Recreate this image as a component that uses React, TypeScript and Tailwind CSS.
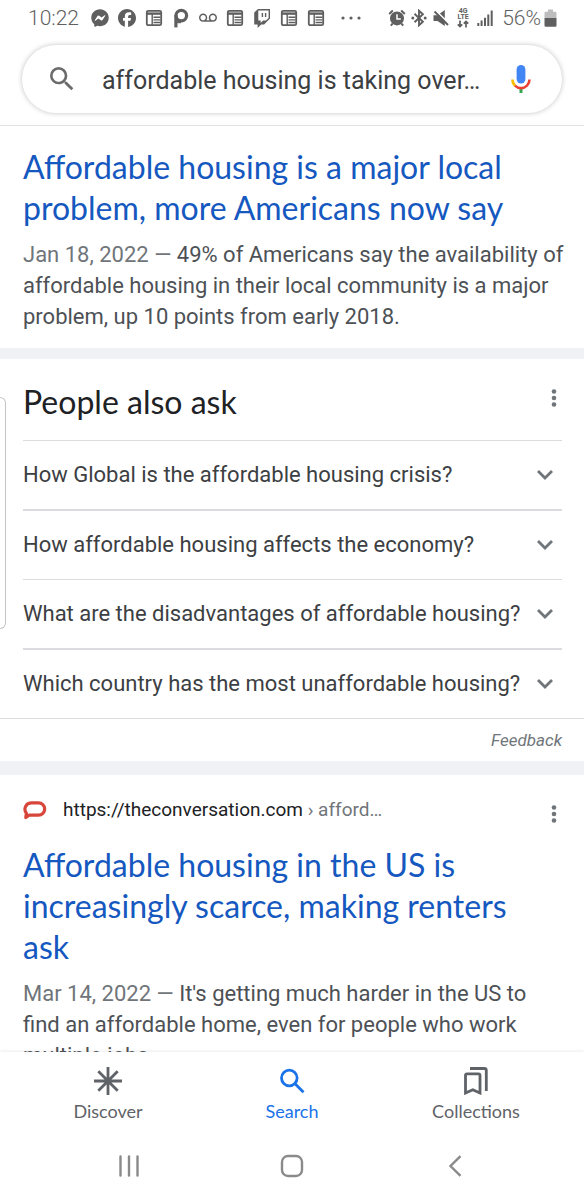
import { useState } from "react";
import { FaFacebook, FaFacebookMessenger } from "react-icons/fa6";
import { MdSearch, MdVoicemail } from "react-icons/md";

const questions = [
  { text: "How Global is the affordable housing crisis?", border: "border-t" },
  { text: "How affordable housing affects the economy?", border: "border-t-2" },
  { text: "What are the disadvantages of affordable housing?", border: "border-t" },
  { text: "Which country has the most unaffordable housing?", border: "border-t-2" },
];

const NewsIcon = () => (
  <svg viewBox="0 0 18 18" className="size-[18px]" fill="none" stroke="currentColor">
    <rect x="1.8" y="1.8" width="14.4" height="14.4" rx="1.5" strokeWidth="1.8" />
    <path d="M2 4.6h14" strokeWidth="2.4" />
    <path d="M7.2 5v11" strokeWidth="1.4" />
    <path d="M8.5 8.3h7M8.5 10.9h7M8.5 13.5h7" strokeWidth="1.4" />
  </svg>
);

const PandoraIcon = () => (
  <svg viewBox="0 0 18 20" className="h-5 w-[18px]" fill="none" stroke="currentColor">
    <circle cx="9.3" cy="7.6" r="5.3" strokeWidth="3.2" />
    <path d="M3.9 7v12.4" strokeWidth="3.2" />
    <path d="M5 14.2h4" strokeWidth="2" />
  </svg>
);

const TwitchIcon = () => (
  <svg viewBox="0 0 18 20" className="h-5 w-[18px]">
    <path d="M5 1 1.2 4.6v11.8h3.4V20l3.6-3.6h2.9L17 10.6V1z" fill="currentColor" />
    <path d="M5.3 2.4h10.3v7.5l-2.7 2.7h-2.8l-2.4 2.3v-2.3H5.3z" fill="#fff" />
    <path d="M9.4 5v4M12.6 5v4" stroke="currentColor" strokeWidth="1.4" />
  </svg>
);

const AlarmIcon = () => (
  <svg viewBox="0 0 18 18" className="size-[18px]">
    <path d="M1.2 5 4.8 1.6M16.8 5l-3.6-3.4M4.6 14.6l-1.8 2M13.4 14.6l1.8 2" stroke="currentColor" strokeWidth="2" />
    <circle cx="9" cy="9.4" r="7" fill="currentColor" />
    <path d="M9 5.2v4.7h3.8" fill="none" stroke="#fff" strokeWidth="1.5" />
  </svg>
);

const BluetoothIcon = () => (
  <svg viewBox="0 0 18 18" className="size-[18px]">
    <path d="m4.500 4.800 8.400 8L9 16.300V1.700l3.900 3.500-8.400 8" fill="none" stroke="currentColor" strokeWidth="1.900" />
    <circle cx="2.800" cy="9" r="1.500" fill="currentColor" />
    <circle cx="15.200" cy="9" r="1.500" fill="currentColor" />
  </svg>
);

const MuteIcon = () => (
  <svg viewBox="0 0 18 18" className="size-[18px]">
    <path d="M1.500 6.200h4L12.800 1v16L5.500 12h-4z" fill="currentColor" />
    <path d="M3.800 1.600 17.200 14.600" stroke="#fff" strokeWidth="1.500" />
    <path d="M2.500 2.500 16 16" stroke="currentColor" strokeWidth="2" />
  </svg>
);

const LteIcon = () => (
  <div className="flex w-[18px] flex-col items-center text-[7px] leading-[6px] font-bold">
    <span>4G</span>
    <span>LTE</span>
    <svg viewBox="0 0 12 8" className="h-2 w-3" fill="none" stroke="currentColor" strokeWidth="1.7">
      <path d="M3 .5v6M.8 4.3 3 6.6l2.2-2.3M9 7.5v-6M6.8 3.7 9 1.4l2.2 2.3" />
    </svg>
  </div>
);

const SignalIcon = () => (
  <svg viewBox="0 0 18 18" className="size-[18px]" stroke="currentColor" strokeWidth="2">
    <path d="M2.3 17v-3M5.6 17v-5.4M9 17V8.8M12.3 17V5.6M15.7 17V1.5" />
  </svg>
);

const BatteryIcon = () => (
  <svg viewBox="0 0 13 18" className="h-[18px] w-[13px]">
    <path d="M4 .5h5v2.3h2.3A1.2 1.2 0 0 1 12.5 4v5H.5V4a1.2 1.2 0 0 1 1.2-1.2H4z" fill="#bdbdbd" />
    <path d="M.5 9h12v7.5a1.2 1.2 0 0 1-1.2 1.2H1.7A1.2 1.2 0 0 1 .5 16.5z" fill="currentColor" />
  </svg>
);

const MicIcon = () => (
  <svg viewBox="0 0 20 28" className="h-7 w-5" fill="none">
    <rect x="5.6" y="0" width="8.8" height="18.5" rx="4.4" fill="#4285f4" />
    <path d="M10 23v5" stroke="#34a853" strokeWidth="3" />
    <path d="M1.5 14.5c0 2.7 1 4.8 2.6 6.2" stroke="#fbbc04" strokeWidth="2.6" />
    <path d="M4 20.6C7.5 24 12.5 24 16 20.6c1.6-1.5 2.5-3.6 2.5-6.1" stroke="#ea4335" strokeWidth="2.6" />
  </svg>
);

const KebabIcon = () => (
  <svg viewBox="0 0 6 18" className="h-[18px] w-[6px]" fill="currentColor">
    <circle cx="3" cy="2.5" r="2.3" />
    <circle cx="3" cy="9" r="2.3" />
    <circle cx="3" cy="15.5" r="2.3" />
  </svg>
);

const ChevronIcon = () => (
  <svg viewBox="0 0 16 12" className="h-3 w-4 shrink-0 text-[#70757a]" fill="none" stroke="currentColor" strokeWidth="2.8">
    <path d="m1 2 7 7 7-7" />
  </svg>
);

const ConversationIcon = () => (
  <svg viewBox="0 0 24 20" className="h-5 w-6" fill="none" stroke="#d8453a" strokeWidth="3.2">
    <path d="M8 2.8h7.500a6 6 0 0 1 0 12.400H6L2.800 17.500l.6-4.300A6.400 6.400 0 0 1 8 2.800z" strokeLinejoin="round" />
  </svg>
);

const DiscoverIcon = () => (
  <svg viewBox="0 0 28 28" className="size-7" stroke="currentColor" strokeWidth="2.8">
    <path d="M14 0v28M0 14h28M4.3 4.3l19.4 19.4M23.7 4.3 4.3 23.7" />
  </svg>
);

const CollectionsIcon = () => (
  <svg viewBox="0 0 28 28" className="size-7" fill="none" stroke="currentColor" strokeWidth="2.8">
    <path d="M3.500 26V8.300a1.500 1.500 0 0 1 1.500-1.500h11.500a1.500 1.500 0 0 1 1.500 1.500V26l-7.200-3.200z" />
    <path d="M8 1.500h14.300a2 2 0 0 1 2 2V24" />
  </svg>
);

const StatusBar = () => (
  <div className="flex h-9 shrink-0 items-center pr-[27px] pb-px pl-7 text-[#5f5f5f]">
    <span className="text-[21px] leading-6 font-light">10:22</span>
    <div className="ml-3 flex items-center gap-[9px]">
      <FaFacebookMessenger className="size-[18px]" />
      <FaFacebook className="size-[18px]" />
      <NewsIcon />
      <PandoraIcon />
      <MdVoicemail className="size-[18px]" />
      <NewsIcon />
      <TwitchIcon />
      <NewsIcon />
      <NewsIcon />
    </div>
    <svg viewBox="0 0 20 4" className="ml-4 h-1 w-5" fill="currentColor">
      <circle cx="2" cy="2" r="1.6" />
      <circle cx="10" cy="2" r="1.6" />
      <circle cx="18" cy="2" r="1.6" />
    </svg>
    <div className="ml-auto flex items-center gap-1">
      <AlarmIcon />
      <BluetoothIcon />
      <MuteIcon />
      <LteIcon />
      <SignalIcon />
      <div className="ml-1 flex items-center gap-[3px]">
        <span className="text-[21px] leading-6 font-light">56%</span>
        <BatteryIcon />
      </div>
    </div>
  </div>
);

const SearchBar = () => {
  const [query, setQuery] = useState("affordable housing is taking over…");

  return (
    <header className="shrink-0 border-b border-[#dfe1e5] px-[22px] pt-[9px] pb-3">
      <form className="flex h-[68px] items-center rounded-full bg-white pr-[31px] pl-6 shadow-[0_0_5px_rgba(32,33,36,0.28)]">
        <MdSearch className="size-8 shrink-0 text-[#6b6b6b]" />
        <input
          aria-label="Search"
          value={query}
          onChange={(e) => setQuery(e.target.value)}
          className="ml-6 min-w-0 flex-1 pt-1 text-[25px] leading-8 text-[#3c4043] outline-none"
        />
        <button type="button" aria-label="Voice search" className="shrink-0">
          <MicIcon />
        </button>
      </form>
    </header>
  );
};

const ResultTitle = ({ children }: { children: string }) => (
  <h3 className="pr-3 font-['Lato'] text-[32px] leading-[41px] text-[#1558c0]">
    <a href="#">{children}</a>
  </h3>
);

const Snippet = ({ date, children }: { date: string; children: string }) => (
  <p className="mt-[11px] text-[22px] leading-[31px] text-[#4d5156]">
    <span className="text-[#70757a]">{date} — </span>
    {children}
  </p>
);

const PeopleAlsoAsk = () => (
  <section>
    <div className="pr-[22px] pl-[23px]">
      <div className="flex h-[81px] items-center justify-between pr-[5px] pb-1">
        <h2 className="pt-2 font-['Lato'] text-[32px] leading-10 text-[#202124]">People also ask</h2>
        <button aria-label="About these questions" className="text-[#70757a]">
          <KebabIcon />
        </button>
      </div>
      {questions.map((q) => (
        <div key={q.text} className={`${q.border} border-[#dadce0]`}>
          <button className="flex h-[68px] w-full items-center justify-between pr-[9px] text-left text-[22px] leading-7 text-[#3c4043]">
            {q.text}
            <ChevronIcon />
          </button>
        </div>
      ))}
    </div>
    <div className="flex h-[43px] items-center justify-end border-t border-[#dadce0] px-[22px]">
      <a href="#" className="text-[17px] leading-6 text-[#70757a] italic">
        Feedback
      </a>
    </div>
  </section>
);

const BottomNav = () => (
  <nav className="grid h-20 shrink-0 grid-cols-3 bg-white px-4 font-['Lato'] text-[18px] leading-6 text-[#5f6368] shadow-[0_-1px_3px_rgba(0,0,0,0.08)]">
    <button className="flex flex-col items-center gap-1 pt-[15px]">
      <DiscoverIcon />
      Discover
    </button>
    <button className="flex flex-col items-center gap-1 pt-[15px] text-[#1a73e8]">
      <svg viewBox="0 0 28 28" className="size-7" fill="none" stroke="currentColor" strokeWidth="2.8">
        <circle cx="11.3" cy="11" r="7.8" />
        <path d="m16.8 16.5 8.7 8.7" />
      </svg>
      Search
    </button>
    <button className="flex flex-col items-center gap-1 pt-[15px]">
      <CollectionsIcon />
      Collections
    </button>
  </nav>
);

const SystemNav = () => (
  <div className="grid h-[68px] shrink-0 grid-cols-3 items-center justify-items-center bg-white px-12 text-[#8a8a8a]">
    <button aria-label="Recent apps">
      <svg viewBox="0 0 22 22" className="size-[22px]" stroke="currentColor" strokeWidth="2.4" strokeLinecap="round">
        <path d="M2.5 1.5v19M11 1.5v19M19.5 1.5v19" />
      </svg>
    </button>
    <button aria-label="Home">
      <svg viewBox="0 0 24 24" className="size-6" fill="none" stroke="currentColor" strokeWidth="2.4">
        <rect x="2" y="2" width="20" height="20" rx="6" />
      </svg>
    </button>
    <button aria-label="Back">
      <svg viewBox="0 0 14 22" className="h-[22px] w-[14px]" fill="none" stroke="currentColor" strokeWidth="2.4">
        <path d="M12.5 1.2 2.5 11l10 9.8" />
      </svg>
    </button>
  </div>
);

const App = () => (
  <div className="flex h-screen flex-col bg-white font-['Roboto',sans-serif]">
    <StatusBar />
    <SearchBar />
    <main className="relative min-h-0 flex-1 overflow-hidden">
      <article className="pt-5 pr-4 pb-4 pl-[23px]">
        <ResultTitle>Affordable housing is a major local problem, more Americans now say</ResultTitle>
        <Snippet date="Jan 18, 2022">
          49% of Americans say the availability of affordable housing in their local community is a major problem, up 10 points from early 2018.
        </Snippet>
      </article>
      <div className="h-[11px] bg-[#eff1f4]" />
      <PeopleAlsoAsk />
      <div className="h-[14px] bg-[#eff1f4]" />
      <article className="pr-4 pl-[23px]">
        <div className="flex h-[69px] items-center pr-[11px]">
          <ConversationIcon />
          <cite className="ml-4 text-[19px] leading-6 text-[#202124] not-italic">
            https://theconversation.com<span className="text-[#70757a]"> › afford…</span>
          </cite>
          <button aria-label="About this result" className="mt-2 ml-auto text-[#70757a]">
            <KebabIcon />
          </button>
        </div>
        <ResultTitle>Affordable housing in the US is increasingly scarce, making renters ask</ResultTitle>
        <Snippet date="Mar 14, 2022">
          It's getting much harder in the US to find an affordable home, even for people who work multiple jobs.
        </Snippet>
      </article>
      {/* edge panel handle */}
      <div className="absolute top-[271px] left-0 h-[232px] w-[6px] rounded-r-md border border-l-0 border-[#c4c4c4] bg-white" />
    </main>
    <BottomNav />
    <SystemNav />
  </div>
);

export default App;
